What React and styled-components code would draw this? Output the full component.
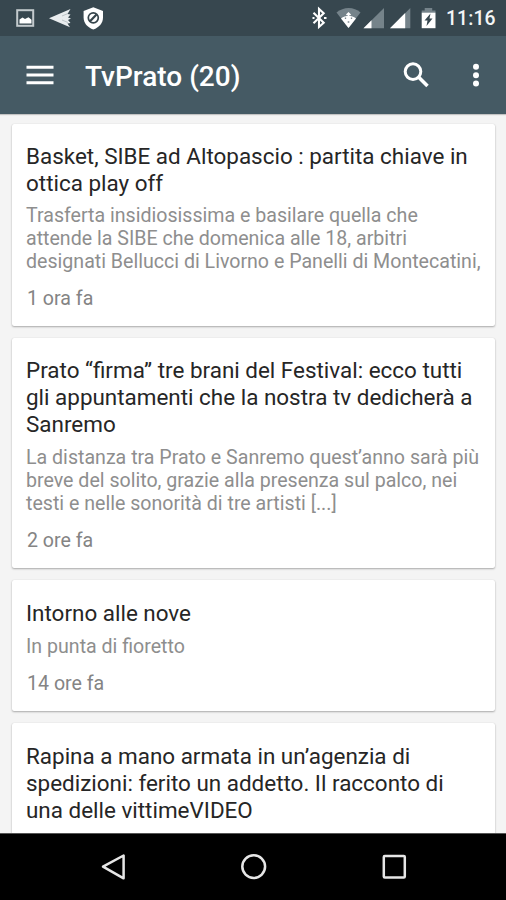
import React from "react";
import styled, { createGlobalStyle } from "styled-components";

const GlobalStyle = createGlobalStyle`
  *, *::before, *::after { box-sizing: border-box; }
  body { margin: 0; background: #f4f4f4; font-family: Roboto, sans-serif; }
`;

const Screen = styled.div`
  display: flex;
  flex-direction: column;
  width: 506px;
  height: 900px;
  overflow: hidden;
  background: #f4f4f4;
`;

const StatusBar = styled.header`
  flex: none;
  display: flex;
  justify-content: space-between;
  height: 36px;
  padding: 0 11px 0 16px;
  background: #37474f;
`;

const Clock = styled.span`
  width: 49px;
  font-size: 19.4px;
  font-weight: 500;
  line-height: 38px;
  letter-spacing: 0.1px;
  white-space: nowrap;
  color: #f3f5f6;
`;

const StatusGroup = styled.div`
  display: flex;
`;

const Toolbar = styled.div`
  flex: none;
  display: flex;
  align-items: center;
  height: 78px;
  padding: 0 14px 0 24px;
  background: #455a64;
  box-shadow: 0 1px 1px rgba(0, 0, 0, 0.2);
`;

const PageTitle = styled.h1`
  flex: 1;
  margin: 3px 0 0 29px;
  font-size: 28px;
  font-weight: 500;
  line-height: 32px;
  white-space: nowrap;
  color: #fff;
`;

const IconButton = styled.button`
  display: flex;
  align-items: center;
  justify-content: center;
  width: ${(p) => p.$width}px;
  height: 48px;
  margin-right: ${(p) => p.$gap || 0}px;
  padding: 0;
  border: 0;
  background: none;
`;

const Feed = styled.main`
  flex: 1;
  min-height: 0;
  display: flex;
  flex-direction: column;
  gap: 12px;
  padding: 10px 11px 0 12px;
  overflow: hidden;
`;

const Card = styled.article`
  flex: none;
  padding: ${(p) => p.$top || 19}px 14px 16px;
  border-radius: 2px;
  background: #fff;
  box-shadow: 0 1px 2px rgba(0, 0, 0, 0.3), 0 0 1px rgba(0, 0, 0, 0.12);
`;

const Headline = styled.h2`
  margin: 0;
  font-size: 22.45px;
  font-weight: 400;
  line-height: 27px;
  color: #262626;
`;

const Excerpt = styled.p`
  margin: ${(p) => p.$gap || 7}px 0 0;
  font-size: 19.6px;
  line-height: 23px;
  color: #8e8e8e;
`;

const Age = styled.time`
  display: block;
  margin: 14px 0 0 1px;
  font-size: 19.6px;
  line-height: 23px;
  color: #848484;
`;

const Line = styled.span`
  display: block;
  white-space: nowrap;
`;

const NavBar = styled.nav`
  flex: none;
  display: flex;
  justify-content: space-between;
  height: 67px;
  padding: 0 99px 0 100px;
  border-top: 1px solid #555;
  background: #000;
`;

const StatusIcons = () => (
  <svg width="90" height="36" viewBox="16 0 90 36">
    <rect x="17.2" y="10.2" width="16" height="15.6" fill="none" stroke="#c3cacd" strokeWidth="2" />
    <path d="M19.5 23.5v-4l3-2 2.5 1.5 3.5-1.8 3 2.5v3.8z" fill="#fff" />
    <path d="M49 18.2 70.5 9l-3 5 3 .5-2.5 3 3 1-3 1.5 2.5 3-3 .5 2.5 3.8z" fill="#e8ecee" />
    <path d="m62 16 6-2.500M62 20l6 2.500" stroke="#aab3b7" strokeWidth=".7" />
    <path d="M93.3 7.3 103 11v6.5c0 5.8-4 10-9.7 12-5.700-2-9.700-6.200-9.700-12V11z" fill="#fff" />
    <circle cx="93.300" cy="17.800" r="5" fill="none" stroke="#35444b" strokeWidth="1.700" />
    <path d="m90 21.200 6.500-6.800" stroke="#35444b" strokeWidth="2.200" />
  </svg>
);

const SystemIcons = () => (
  <svg width="136" height="36" viewBox="310 0 136 36">
    <path d="m313.500 12.800 10.200 10L319 27V9l4.700 4.300-10.200 10" fill="none" stroke="#fff" strokeWidth="2.100" />
    <path d="M312.500 18h2m9.500 0h2.500" stroke="#fff" strokeWidth="2.200" />
    <path d="M336.500 12.500c7-6 17.500-6 24 0L348.500 28z" fill="#75838a" />
    <path d="M341 18.500c4.500-3.700 10.500-3.700 15 0L348.500 28z" fill="#fff" />
    <path d="M348.500 13v10m-5-5h10m-7-3 2-2 2 2m-2 8-2-2m2 2 2-2" fill="none" stroke="#fff" strokeWidth="1.500" />
    <path d="M345.500 17.500v1.500m6-1.500v1.500m-3.800 3h1.600" stroke="#7c888e" strokeWidth="1.300" />
    <path d="M363.500 28.200 384 8v20.200z" fill="#75838a" />
    <path d="m363.500 28.200 8-8v8z" fill="#fff" />
    <path d="M390 28.200 410.300 8v20.200z" fill="#75838a" />
    <path d="m390 28.200 15.200-15.100v15.100z" fill="#fff" />
    <path d="M421.700 13v-2.500h3V8h7.500v2.500h3.300V13z" fill="#75838a" />
    <path d="M421.700 12.700h13.800v15.500h-13.800z" fill="#fff" />
    <path d="m430.500 13.500-6 7h3l-1 5.500 6-7.500h-3z" fill="#37474f" />
  </svg>
);

const MenuIcon = () => (
  <svg width="32" height="24" viewBox="0 0 32 24">
    <path d="M2.500 4.200h27M2.500 12h27M2.500 19.800h27" stroke="#fff" strokeWidth="3" />
  </svg>
);

const SearchIcon = () => (
  <svg width="32" height="32" viewBox="0 0 32 32">
    <circle cx="13" cy="12.600" r="7.800" fill="none" stroke="#fff" strokeWidth="3" />
    <path d="m18.500 18 9 9" stroke="#fff" strokeWidth="3.600" />
  </svg>
);

const MoreIcon = () => (
  <svg width="8" height="26" viewBox="0 0 8 26" fill="#fff">
    <circle cx="4" cy="4.800" r="3" />
    <circle cx="4" cy="13.200" r="3" />
    <circle cx="4" cy="21.600" r="3" />
  </svg>
);

const NavIcon = ({ children }) => (
  <svg width="28" height="66" viewBox="0 0 28 66" fill="none" stroke="#e6e6e6" strokeWidth="2.500" strokeLinejoin="round">
    {children}
  </svg>
);

const stories = [
  {
    title: ["Basket, SIBE ad Altopascio : partita chiave in", "ottica play off"],
    excerpt: [
      "Trasferta insidiosissima e basilare quella che",
      "attende la SIBE che domenica alle 18, arbitri",
      "designati Bellucci di Livorno e Panelli di Montecatini,",
    ],
    age: "1 ora fa",
  },
  {
    title: ["Prato “firma” tre brani del Festival: ecco tutti", "gli appuntamenti che la nostra tv dedicherà a", "Sanremo"],
    excerpt: [
      "La distanza tra Prato e Sanremo quest’anno sarà più",
      "breve del solito, grazie alla presenza sul palco, nei",
      "testi e nelle sonorità di tre artisti [...]",
    ],
    age: "2 ore fa",
    gap: 8,
  },
  { title: ["Intorno alle nove"], excerpt: ["In punta di fioretto"], age: "14 ore fa", gap: 8, top: 20 },
  {
    title: ["Rapina a mano armata in un’agenzia di", "spedizioni: ferito un addetto. Il racconto di", "una delle vittimeVIDEO"],
    excerpt: [],
    top: 20,
  },
];

const lines = (items) => items.map((text) => <Line key={text}>{text}</Line>);

const Story = ({ title, excerpt, age, gap, top }) => (
  <Card $top={top}>
    <Headline>{lines(title)}</Headline>
    <Excerpt $gap={gap}>{lines(excerpt)}</Excerpt>
    {age && <Age>{age}</Age>}
  </Card>
);

export default function App() {
  return (
    <Screen>
      <GlobalStyle />
      <StatusBar>
        <StatusIcons />
        <StatusGroup>
          <SystemIcons />
          <Clock>11:16</Clock>
        </StatusGroup>
      </StatusBar>
      <Toolbar>
        <IconButton $width={32} aria-label="Menu"><MenuIcon /></IconButton>
        <PageTitle>TvPrato (20)</PageTitle>
        <IconButton $width={32} $gap={28} aria-label="Search"><SearchIcon /></IconButton>
        <IconButton $width={32} aria-label="More options"><MoreIcon /></IconButton>
      </Toolbar>
      <Feed>
        {stories.map((story) => <Story key={story.title[0]} {...story} />)}
      </Feed>
      <NavBar>
        <NavIcon><path d="M3 32.600 23.600 21.500v22.800z" /></NavIcon>
        <NavIcon><circle cx="13.700" cy="32.600" r="11.400" /></NavIcon>
        <NavIcon><rect x="4.800" y="22" width="21" height="21.400" rx="1" /></NavIcon>
      </NavBar>
    </Screen>
  );
}
